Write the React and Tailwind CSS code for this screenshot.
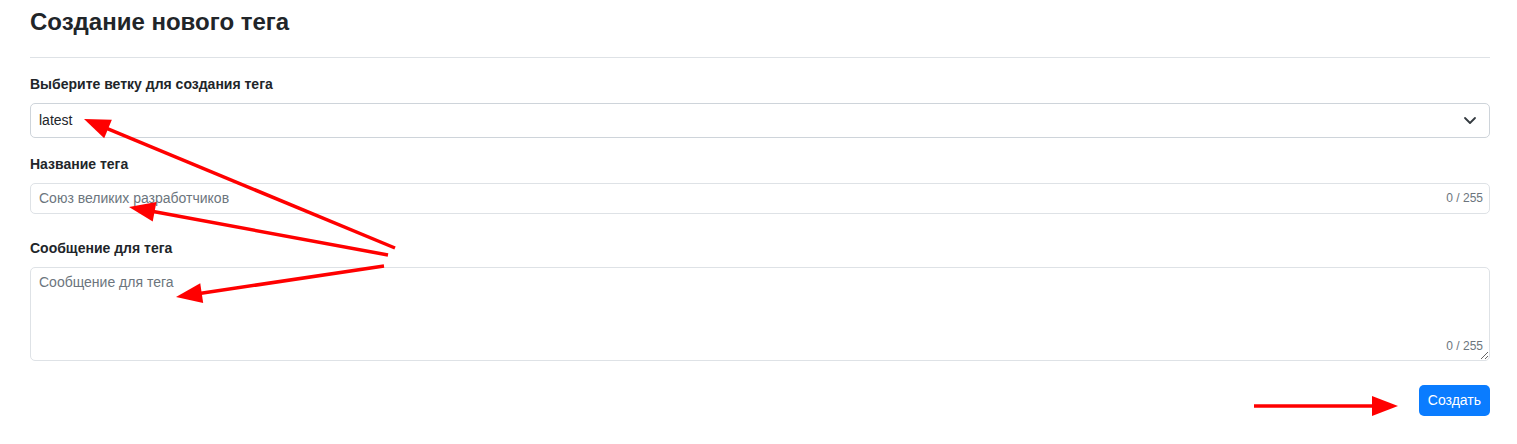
import { useState } from 'react';

const Arrow = ({ x1, y1, x2, y2 }) => {
  // arrow head drawn at (x2, y2)
  const dx = x2 - x1;
  const dy = y2 - y1;
  const len = Math.sqrt(dx * dx + dy * dy);
  const ux = dx / len;
  const uy = dy / len;
  const headLen = 26;
  const headW = 10;
  const bx = x2 - ux * headLen;
  const by = y2 - uy * headLen;
  const p1 = `${bx - uy * headW},${by + ux * headW}`;
  const p2 = `${bx + uy * headW},${by - ux * headW}`;
  return (
    <g>
      <line x1={x1} y1={y1} x2={bx + ux * 4} y2={by + uy * 4} stroke="#ff0000" strokeWidth="3.5" />
      <polygon points={`${x2},${y2} ${p1} ${p2}`} fill="#ff0000" />
    </g>
  );
};

export default function App() {
  const [branch, setBranch] = useState('latest');
  const [name, setName] = useState('');
  const [message, setMessage] = useState('');

  return (
    <div className="relative w-[1517px] h-[444px] bg-white text-[#212529]" style={{ fontFamily: '"Liberation Sans", Arial, sans-serif' }}>
      <div className="pl-[30px] pt-[8px] w-[1490px]">
        <h2 className="text-[24px] font-bold leading-[1.2]">Создание нового тега</h2>
        <hr className="mt-[20px] mb-[16px] border-0 border-t border-[#dee2e6]" />

        <label className="block text-[14px] font-bold leading-[21px] mb-[8px]">Выберите ветку для создания тега</label>
        <div className="relative">
          <select
            value={branch}
            onChange={(e) => setBranch(e.target.value)}
            className="appearance-none w-full h-[35px] border border-[#ced4da] rounded-[5px] pl-[8px] text-[14px] text-[#212529] bg-white outline-none"
          >
            <option value="latest">latest</option>
            <option value="main">main</option>
          </select>
          <svg className="absolute right-[13px] top-[12px] pointer-events-none" width="14" height="10" viewBox="0 0 14 10">
            <path d="M2 3l5 5 5-5" fill="none" stroke="#343a40" strokeWidth="1.8" strokeLinecap="round" strokeLinejoin="round" />
          </svg>
        </div>

        <label className="block text-[14px] font-bold leading-[21px] mt-[16px] mb-[8px]">Название тега</label>
        <div className="relative flex items-center">
          <input
            value={name}
            onChange={(e) => setName(e.target.value)}
            placeholder="Союз великих разработчиков"
            className="w-full h-[31px] border border-[#dee2e6] rounded-[5px] pl-[8px] text-[14px] placeholder:text-[#6c757d] outline-none"
          />
          <span className="absolute right-[7px] text-[12px] text-[#6c757d]">0 / 255</span>
        </div>

        <label className="block text-[14px] font-bold leading-[21px] mt-[24px] mb-[8px]">Сообщение для тега</label>
        <div className="relative flex">
          <textarea
            value={message}
            onChange={(e) => setMessage(e.target.value)}
            placeholder="Сообщение для тега"
            className="w-full h-[94px] border border-[#dee2e6] rounded-[5px] pl-[8px] pt-[4px] text-[14px] leading-[21px] placeholder:text-[#6c757d] outline-none resize-y"
          />
          <span className="absolute right-[7px] bottom-[6px] text-[12px] text-[#6c757d]">0 / 255</span>
        </div>

        <div className="flex justify-end mt-[24px]">
          <button className="h-[31px] px-[9px] rounded-[5px] bg-[#0a7cff] text-white text-[14px]">Создать</button>
        </div>
      </div>

      <svg className="absolute left-0 top-0 pointer-events-none" width="1517" height="444">
        <Arrow x1={395} y1={248} x2={84} y2={119} />
        <Arrow x1={388} y1={255} x2={129} y2={207} />
        <Arrow x1={384} y1={266} x2={176} y2={297} />
        <Arrow x1={1254} y1={406} x2={1398} y2={406} />
      </svg>
    </div>
  );
}
